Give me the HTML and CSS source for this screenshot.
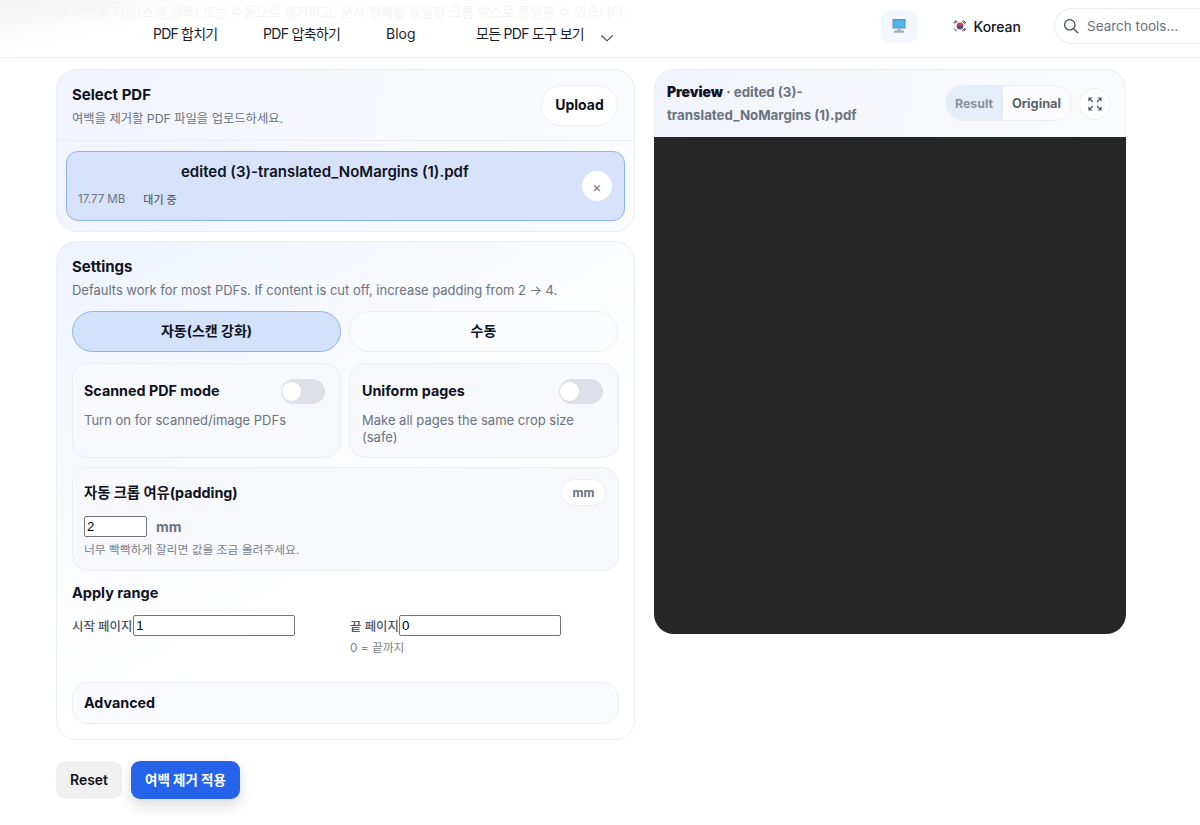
FILE: index.html
```html
<!DOCTYPE html>
<html lang="ko">
<head>
  <meta charset="UTF-8">
  <title>PDF 여백 제거</title>
  <link rel="stylesheet" href="styles.css">
</head>
<body>
  <!-- Page text scrolled under the header -->
  <div class="ghost-text">흰 여백을 자동(스캔 강화) 또는 수동으로 제거하고, 문서 전체를 동일한 크롭 박스로 통일할 수 있습니다.</div>

  <header class="topbar">
    <nav class="nav">
      <a class="nav-link nav-merge">PDF 합치기</a>
      <a class="nav-link nav-compress">PDF 압축하기</a>
      <a class="nav-link nav-blog">Blog</a>
      <a class="nav-link nav-all">모든 PDF 도구 보기</a>
      <svg class="nav-caret" width="14" height="8" viewBox="0 0 14 8"><path d="M1.500 1.500 7 6.800l5.500-5.300" fill="none" stroke="#374151" stroke-width="1.100"/></svg>
    </nav>
    <div class="top-tools">
      <div class="device-btn">
        <svg width="16" height="16" viewBox="0 0 16 16">
          <rect x="1.500" y="1" width="13" height="9.500" fill="#5b93b8"/>
          <rect x="2.700" y="2.200" width="10.600" height="7.200" fill="#4fb6ea"/>
          <rect x="6" y="10.500" width="4" height="2" fill="#b5b9c6"/>
          <rect x="3" y="12.500" width="10" height="2.200" fill="#a9a6b8"/>
        </svg>
      </div>
      <div class="lang">
        <svg width="14" height="14" viewBox="0 0 14 14">
          <circle cx="7" cy="7" r="3.400" fill="#d8344a"/>
          <path d="M3.700 7.400a3.400 3.400 0 0 0 6.600 0C9.200 6 8 8.200 7 7.400S4.800 6.200 3.700 7.400z" fill="#2a4c9c"/>
          <path d="M.8 3.800 3 1.300M1.800 4.600 4 2.100M10.200 1.500l2.500 2.500M9.600 2.300l2.500 2.500M1.200 9.600l2.500 2.600M10.400 12.400l2.400-2.500M9.700 11.700l2.400-2.500" stroke="#222" stroke-width="1" fill="none"/>
        </svg>
        <span>Korean</span>
      </div>
      <div class="search">
        <svg width="16" height="16" viewBox="0 0 16 16"><circle cx="6.800" cy="6.800" r="5.200" fill="none" stroke="#374151" stroke-width="1.200"/><path d="m10.600 10.600 4.400 4.400" stroke="#374151" stroke-width="1.200"/></svg>
        <span>Search tools…</span>
      </div>
    </div>
  </header>

  <main class="layout">
    <div class="left-col">
      <section class="card upload-card">
        <div class="upload-head">
          <div>
            <h2 class="card-title">Select PDF</h2>
            <p class="muted">여백을 제거할 PDF 파일을 업로드하세요.</p>
          </div>
          <button class="upload-btn">Upload</button>
        </div>
        <div class="upload-body">
          <div class="file-row">
            <div class="file-info">
              <div class="file-name">edited (3)-translated_NoMargins (1).pdf</div>
              <div class="file-meta"><span>17.77 MB</span><span class="file-status">대기 중</span></div>
            </div>
            <button class="file-remove">×</button>
          </div>
        </div>
      </section>

      <section class="card settings-card">
        <h2 class="card-title">Settings</h2>
        <p class="muted settings-desc">Defaults work for most PDFs. If content is cut off, increase padding from 2 → 4.</p>

        <div class="mode-row">
          <button class="mode-btn active">자동(스캔 강화)</button>
          <button class="mode-btn">수동</button>
        </div>

        <div class="option-row">
          <div class="panel option">
            <div class="option-head">
              <strong>Scanned PDF mode</strong>
              <span class="toggle"></span>
            </div>
            <p class="muted">Turn on for scanned/image PDFs</p>
          </div>
          <div class="panel option option-right">
            <div class="option-head">
              <strong>Uniform pages</strong>
              <span class="toggle"></span>
            </div>
            <p class="muted">Make all pages the same crop size (safe)</p>
          </div>
        </div>

        <div class="panel padding-panel">
          <div class="padding-head">
            <strong>자동 크롭 여유(padding)</strong>
            <span class="unit-pill">mm</span>
          </div>
          <div class="padding-input">
            <input class="field field-small" type="text" value="2">
            <span class="unit">mm</span>
          </div>
          <p class="hint">너무 빡빡하게 잘리면 값을 조금 올려주세요.</p>
        </div>

        <h3 class="range-title">Apply range</h3>
        <div class="range-row">
          <div class="range-left">
            <label class="range-label">시작 페이지<input class="field" type="text" value="1"></label>
          </div>
          <div class="range-right">
            <label class="range-label">끝 페이지<input class="field" type="text" value="0"></label>
            <p class="hint range-hint">0 = 끝까지</p>
          </div>
        </div>

        <div class="panel advanced">Advanced</div>
      </section>

      <div class="actions">
        <button class="reset-btn">Reset</button>
        <button class="apply-btn">여백 제거 적용</button>
      </div>
    </div>

    <section class="card preview-card">
      <div class="preview-head">
        <div class="preview-title">
          <strong>Preview</strong><span> · edited (3)-</span><br>
          <span>translated_NoMargins (1).pdf</span>
        </div>
        <div class="segment">
          <span class="segment-item on">Result</span>
          <span class="segment-item">Original</span>
        </div>
        <button class="expand-btn">
          <svg width="14" height="14" viewBox="0 0 14 14" fill="none" stroke="#4b5563" stroke-width="1.200">
            <path d="M1 4.200V1h3.200M1 1l4 4M13 4.200V1H9.800M13 1 9 5M1 9.800V13h3.200M1 13l4-4M13 9.800V13H9.800M13 13 9 9"/>
          </svg>
        </button>
      </div>
      <div class="preview-canvas"></div>
    </section>
  </main>
</body>
</html>
```

FILE: styles.css
```css
* {
  box-sizing: border-box;
}

body {
  margin: 0;
  min-height: 825px;
  background: #fff;
  color: #0f1222;
  font-family: Inter, "Noto Sans CJK KR", sans-serif;
  font-size: 13px;
  overflow: hidden;
  position: relative;
}

p, h2, h3 {
  margin: 0;
}

button {
  font-family: inherit;
  cursor: pointer;
}

.ghost-text {
  position: absolute;
  top: 2px;
  left: 56px;
  z-index: 1;
  font-size: 13.300px;
  color: #f3f4f6;
  white-space: nowrap;
}

/* Header */
.topbar {
  height: 58px;
  border-bottom: 1px solid #eceef1;
  display: flex;
  justify-content: space-between;
  background: linear-gradient(168deg, #f2f2f3 0, #fdfdfd 13%, #ffffff 20%);
}

.nav {
  display: flex;
  align-items: center;
  padding: 8px 0 0 153px;
  font-size: 14px;
  color: #1c1f2b;
  height: 58px;
}

.nav-link {
  white-space: nowrap;
}

.nav-merge { width: 110px; letter-spacing: -0.8px; }
.nav-compress { width: 123px; letter-spacing: -0.7px; }
.nav-blog { width: 90px; }
.nav-all { width: 124px; letter-spacing: -0.7px; }

.nav-caret {
  margin-top: 9px;
}

.top-tools {
  display: flex;
  align-items: center;
  height: 52px;
}

.device-btn {
  width: 37px;
  height: 33px;
  margin-right: 35px;
  border-radius: 9px;
  background: #f4f7fd;
  display: flex;
  align-items: center;
  justify-content: center;
}

.lang {
  display: flex;
  align-items: center;
  gap: 7px;
  margin-right: 33px;
  font-size: 14px;
  font-weight: 500;
}

.search {
  width: 150px;
  height: 36px;
  margin-right: -4px;
  border: 1px solid #eceef1;
  border-radius: 18px 0 0 18px;
  border-right: none;
  padding-left: 8px;
  display: flex;
  align-items: center;
  gap: 8px;
  font-size: 13.500px;
  color: #6b7280;
  white-space: nowrap;
}

/* Layout */
.layout {
  display: grid;
  grid-template-columns: 579px 472px;
  gap: 19px;
  padding: 11px 0 0 56px;
  align-items: start;
}

.left-col {
  display: flex;
  flex-direction: column;
  gap: 9px;
}

.card {
  border: 1px solid #eceef2;
  border-radius: 20px;
  overflow: hidden;
  background: #fff;
}

.card-title {
  font-size: 15px;
  font-weight: 700;
  line-height: 20px;
}

.muted {
  font-size: 13px;
  line-height: 17px;
  color: #6b7280;
}

/* Upload */
.upload-card {
  height: 163px;
  background: linear-gradient(100deg, #f1f4fd 0, #fbfcfe 100%);
}

.upload-head {
  height: 71px;
  padding: 15px 16px 0 15px;
  display: flex;
  justify-content: space-between;
  border-bottom: 1px solid #e9ecf2;
}

.upload-head .muted {
  margin-top: 5px;
  font-size: 12.300px;
}

.upload-btn {
  width: 77px;
  height: 41px;
  padding-bottom: 3px;
  border: 1px solid #eceef2;
  border-radius: 21px;
  background: #fff;
  color: #0f1222;
  font-size: 14px;
  font-weight: 700;
}

.upload-body {
  padding: 10px 9px;
}

.file-row {
  height: 70px;
  border: 1px solid #8fb2f5;
  border-radius: 12px;
  background: #d7e3fb;
  display: flex;
  align-items: center;
  justify-content: space-between;
  padding: 0 12px 0 11px;
}

.file-info {
  width: 480px;
  margin-top: -3px;
}

.file-name {
  font-size: 15px;
  font-weight: 600;
  line-height: 20px;
  padding-left: 103px;
  white-space: nowrap;
}

.file-meta {
  display: flex;
  align-items: center;
  gap: 18px;
  margin-top: 9px;
  font-size: 11.500px;
  color: #6b7280;
}

.file-status {
  font-size: 11px;
  font-weight: 500;
  color: #5b6270;
}

.file-remove {
  width: 30px;
  height: 30px;
  border: none;
  border-radius: 50%;
  background: #fff;
  color: #6b7280;
  font-size: 14px;
  padding: 0;
}

/* Settings */
.settings-card {
  height: 499px;
  padding: 15px 15px 0;
  background: linear-gradient(150deg, #eef3fe 0, #fbfcff 40%, #ffffff 62%);
}

.settings-desc {
  margin-top: 5px;
  letter-spacing: -0.02px;
}

.mode-row, .option-row, .range-row {
  display: grid;
  grid-template-columns: 269px 270px;
  gap: 8px;
}

.mode-row {
  grid-template-columns: 269px 269px;
  margin-top: 12px;
}

.mode-btn {
  height: 41px;
  padding-bottom: 4px;
  border: 1px solid #eceef2;
  border-radius: 21px;
  background: #fbfcfe;
  color: #0f1222;
  font-size: 14px;
  font-weight: 700;
}

.mode-btn.active {
  border-color: #8fb2f5;
  background: #d3e2fb;
}

.panel {
  border: 1px solid #eceef2;
  border-radius: 16px;
  background: #f8f9fd;
}

.option-row {
  margin-top: 11px;
}

.option {
  height: 95px;
  padding: 14px 15px 0 11px;
}

.option-right {
  padding-left: 12px;
}

.option strong, .padding-head strong {
  font-size: 14.300px;
  font-weight: 700;
}

.option-head {
  display: flex;
  justify-content: space-between;
  align-items: center;
  height: 25px;
  margin-bottom: 9px;
}

.toggle {
  width: 44px;
  height: 25px;
  margin-top: 2px;
  border-radius: 13px;
  background: #dde1e7;
  position: relative;
}

.toggle::after {
  content: "";
  position: absolute;
  left: 1px;
  top: 3px;
  width: 19px;
  height: 19px;
  border-radius: 50%;
  background: #fff;
}

.padding-panel {
  height: 104px;
  margin-top: 9px;
  padding: 10px 12px 0 11px;
}

.padding-head {
  display: flex;
  justify-content: space-between;
  align-items: center;
  height: 27px;
}

.unit-pill {
  width: 45px;
  height: 27px;
  margin-top: 2px;
  border: 1px solid #eceef2;
  border-radius: 14px;
  background: #fff;
  color: #6b7280;
  font-size: 12px;
  font-weight: 700;
  display: flex;
  align-items: center;
  justify-content: center;
}

.padding-input {
  display: flex;
  align-items: center;
  gap: 9px;
  margin-top: 11px;
}

.field {
  width: 162px;
  height: 21px;
  border: 1px solid #767676;
  border-radius: 2px;
  padding: 1px 2px;
  font-family: "Liberation Sans", Arial, sans-serif;
  font-size: 13.333px;
  color: #000;
  background: #fff;
}

.field-small {
  width: 63px;
}

.unit {
  color: #6b7280;
  font-size: 14px;
  font-weight: 700;
}

.hint {
  font-size: 11.800px;
  line-height: 16px;
  color: #7b818d;
}

.padding-panel .hint {
  margin-top: 5px;
}

.range-title {
  margin-top: 12px;
  font-size: 14.500px;
  font-weight: 700;
  line-height: 20px;
}

.range-row {
  margin-top: 12px;
  height: 55px;
}

.range-left .field {
  margin-left: 1px;
}

.range-right {
  padding-left: 1px;
}

.range-label {
  display: flex;
  align-items: center;
  font-size: 12.400px;
  font-weight: 500;
  color: #4b5563;
  white-space: nowrap;
}

.range-hint {
  margin-top: 4px;
}

.advanced {
  height: 42px;
  margin-top: 12px;
  padding: 0 0 2px 11px;
  display: flex;
  align-items: center;
  font-size: 14.300px;
  font-weight: 700;
  background: #fafbfe;
}

.actions {
  display: flex;
  gap: 9px;
  margin-top: 12px;
}

.reset-btn {
  width: 66px;
  height: 38px;
  padding-bottom: 2px;
  border: none;
  border-radius: 9px;
  background: #f0f0f0;
  color: #0f1222;
  font-size: 14px;
  font-weight: 600;
}

.apply-btn {
  width: 109px;
  height: 38px;
  padding-bottom: 4px;
  border: none;
  border-radius: 9px;
  background: #2563eb;
  color: #fff;
  font-size: 13.500px;
  font-weight: 700;
  box-shadow: 0 6px 14px rgba(17, 24, 39, 0.16);
}

/* Preview */
.preview-card {
  height: 565px;
  border: none;
  display: flex;
  flex-direction: column;
  background: #f4f7fd;
}

.preview-head {
  height: 68px;
  padding: 0 14px 0 12px;
  display: flex;
  align-items: center;
  border: 1px solid #eceef2;
  border-bottom: none;
  border-radius: 20px 20px 0 0;
  background: linear-gradient(100deg, #f1f4fc 0, #fbfcfe 100%);
}

.preview-title {
  width: 278px;
  margin-top: -1px;
  font-size: 13.300px;
  font-weight: 700;
  line-height: 23px;
  color: #6b7280;
}

.preview-title strong {
  font-size: 14px;
  letter-spacing: -0.1px;
  color: #0f1222;
}

.segment {
  display: flex;
  height: 36px;
  margin-top: -1px;
  border: 1px solid #eceef2;
  border-radius: 18px;
  overflow: hidden;
  font-size: 12.800px;
  font-weight: 700;
  background: #fbfcfe;
  color: #5b6270;
}

.segment-item {
  display: flex;
  align-items: center;
  padding: 0 10px 0 9px;
}

.segment-item.on {
  width: 57px;
  padding-left: 9px;
  font-size: 12.400px;
  background: #e6edfa;
  color: #8b919d;
}

.expand-btn {
  width: 32px;
  height: 32px;
  margin: 0 0 0 7px;
  padding: 0;
  border: 1px solid #eceef2;
  border-radius: 50%;
  background: #fff;
  display: flex;
  align-items: center;
  justify-content: center;
}

.preview-canvas {
  flex: 1;
  background: #262626;
}
```
